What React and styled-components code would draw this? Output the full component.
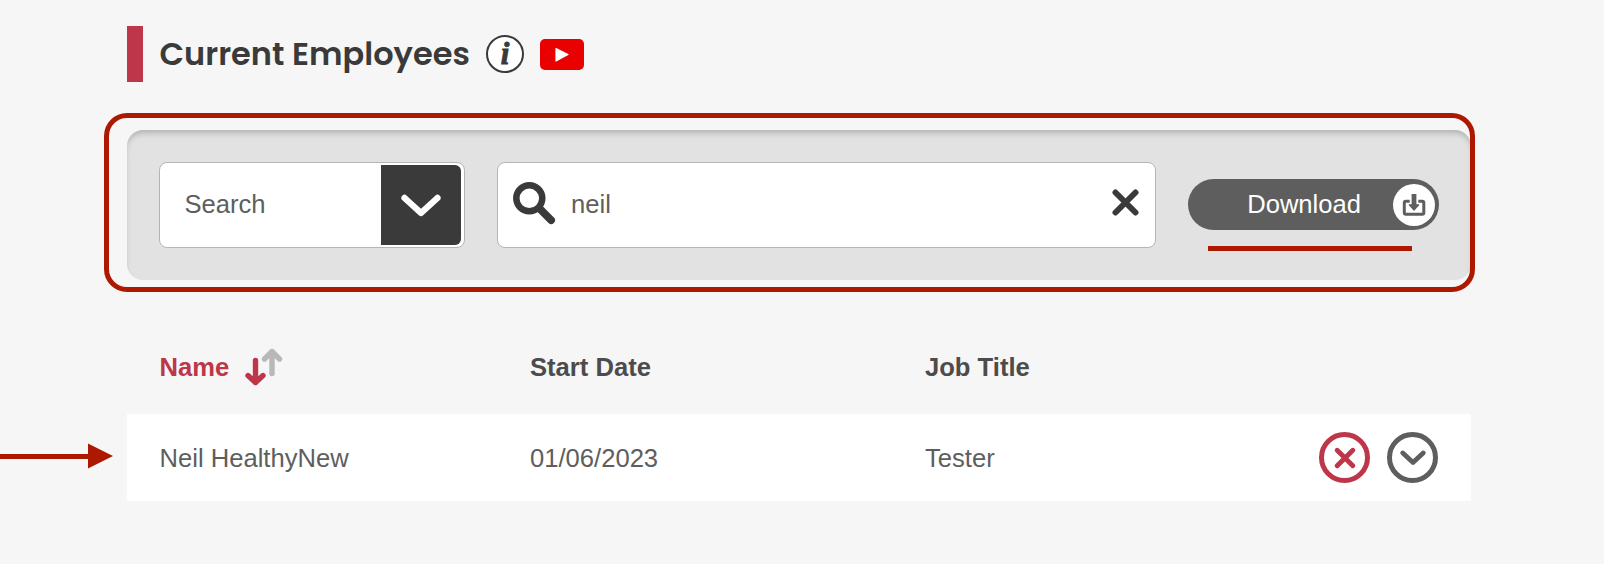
import React, {useState} from "react";
import styled, {createGlobalStyle} from "styled-components";

const cherry = '#bd3649';
const brick = '#ad1900';
const charcoal = '#3a3a3a';
const grey = '#5e5e5e';

const GlobalStyle = createGlobalStyle`
  * {
    box-sizing: border-box;
  }

  body {
    margin: 0;
    background: #f6f6f6;
    color: ${grey};
    font-family: "Liberation Sans", Arial, sans-serif;
    font-size: 25.6px;
    line-height: 30px;
  }

  svg {
    display: block;
    flex: none;
  }
`;

const Page = styled.main`
  position: relative;
  width: 1604px;
  height: 564px;
  padding: 26px 133px 0 127px;
  overflow: hidden;
`;

const TitleBar = styled.header`
  display: flex;
  align-items: center;
  height: 56px;
  padding-left: 16.5px;
  border-left: 16px solid ${cherry};
`;

const Title = styled.h1`
  width: 326.5px;
  margin: 0;
  color: ${charcoal};
  font-family: Poppins, Inter, sans-serif;
  font-size: 32px;
  font-weight: 600;
  line-height: 40px;
  white-space: nowrap;
`;

const InfoIcon = styled.span`
  display: flex;
  align-items: center;
  justify-content: center;
  width: 38px;
  height: 38px;
  margin: 0 15.5px 1px 0;
  border: 2px solid ${charcoal};
  border-radius: 50%;
  background: white;
  color: ${charcoal};
  font: italic bold 31px/32px "Liberation Serif", serif;
  -webkit-text-stroke: 0.9px ${charcoal};
`;

const FilterPanel = styled.section`
  position: relative;
  display: flex;
  align-items: center;
  gap: 32px;
  height: 150px;
  margin-top: 48px;
  padding: 0 32px;
  border-radius: 16px;
  background: #e2e2e2;
  box-shadow: inset 0 5px 6px -2px rgba(0, 0, 0, 0.22);
`;

const Field = styled.div`
  display: flex;
  align-items: center;
  width: ${props => props.$width};
  height: 86px;
  border: 1px solid #b5b5b5;
  border-radius: 8px;
  background: white;
`;

const FieldText = styled.span`
  flex: 1;
  padding: 0 0 2px 24.5px;
`;

const DropdownButton = styled.button`
  display: flex;
  align-items: center;
  justify-content: center;
  width: 80px;
  height: 80px;
  margin-right: 3px;
  padding: 2px 0 0;
  border: none;
  border-radius: 0 6px 6px 0;
  background: ${charcoal};
  cursor: pointer;
`;

const SearchIconWrap = styled.span`
  margin: 0 0 3px 15px;
`;

const SearchInput = styled.input`
  flex: 1;
  min-width: 0;
  height: 60px;
  padding: 0 0 1px 15px;
  border: none;
  outline: none;
  background: none;
  color: ${grey};
  font: inherit;
`;

const ClearButton = styled.button`
  margin: 0 16px 5px 0;
  padding: 0;
  border: none;
  background: none;
  cursor: pointer;
`;

const DownloadButton = styled.button`
  display: flex;
  align-items: center;
  justify-content: flex-end;
  width: 251px;
  height: 51px;
  margin-bottom: 1px;
  padding: 0 4px 0 0;
  border: none;
  border-radius: 26px;
  background: ${grey};
  color: white;
  font: inherit;
  cursor: pointer;
`;

const DownloadText = styled.span`
  padding-bottom: 1px;
`;

const DownloadBadge = styled.span`
  display: flex;
  align-items: center;
  justify-content: center;
  width: 42px;
  height: 42px;
  margin-left: 32px;
  border-radius: 50%;
  background: white;
`;

// Annotations lie over the panel
const Outline = styled.div`
  position: absolute;
  inset: -17px -4px -12px -23px;
  border: 5px solid ${brick};
  border-radius: 23px;
  pointer-events: none;
`;

const Underline = styled.div`
  position: absolute;
  top: 116px;
  left: 1081px;
  width: 204px;
  height: 5px;
  background: ${brick};
`;

const Pointer = styled.svg`
  position: absolute;
  top: 443px;
  left: 0;
`;

const Row = styled.div`
  display: grid;
  grid-template-columns: 370.5px 395px 1fr auto;
  align-items: center;
  height: ${props => props.$head ? '94px' : '87px'};
  padding: 0 33px 0 32.5px;
  background: ${props => props.$head ? 'none' : 'white'};
`;

const Table = styled.section`
  margin-top: 40px;
`;

const HeadCell = styled.div`
  display: flex;
  align-items: center;
  gap: 16px;
  color: ${props => props.$active ? cherry : '#4c4c4c'};
  font-weight: bold;
`;

const Actions = styled.div`
  display: flex;
  gap: 17px;
`;

const RoundButton = styled.button`
  display: flex;
  align-items: center;
  justify-content: center;
  width: 51px;
  height: 51px;
  padding: 0;
  border: 5px solid ${props => props.$color};
  border-radius: 50%;
  background: white;
  cursor: pointer;
`;

const Stroke = ({width, height, d, color, weight, children}) => {
    return <svg width={width} height={height} viewBox={`0 0 ${width} ${height}`} fill="none" stroke={color}
                strokeWidth={weight} strokeLinecap="round" strokeLinejoin="round">
        <path d={d}/>
        {children}
    </svg>;
}

const VideoIcon = () => {
    return <svg width="44" height="31" viewBox="0 0 44 31">
        <rect width="44" height="31" rx="5" fill="#e90000"/>
        <path d="M16 9.5 28 15.5 16 22Z" fill="white" stroke="white" strokeWidth="1.2" strokeLinejoin="round"/>
    </svg>;
}

const SearchIcon = () => {
    return <svg width="43" height="43" viewBox="0 0 43 43" fill="none" stroke={charcoal}>
        <circle cx="16.3" cy="16.3" r="13" strokeWidth="6.5"/>
        <path d="M26.5 26.5 38.2 38.2" strokeWidth="7.6" strokeLinecap="round"/>
    </svg>;
}

const DownloadIcon = () => {
    return <svg width="24" height="24" viewBox="0.7 0 24 24" fill="none" stroke={grey}>
        <path d="M8.4 8.2H4.5Q3 8.2 3 9.7V19.8Q3 21.3 4.5 21.3H21Q22.5 21.3 22.5 19.8V9.7Q22.5 8.2 21 8.2H17"
              strokeWidth="3"/>
        <path d="M12.7 1V13" strokeWidth="4.8"/>
        <path d="M8 11.8H17.4L12.7 17Z" fill={grey} strokeWidth="1.2" strokeLinejoin="round"/>
    </svg>;
}

const SortIcon = () => {
    return <Stroke width={38} height={38} weight={5.4} color="#b8b8b8" d="M27 25.5V3.5M19.5 11 27 3.5 34.5 11">
        <path stroke={cherry} d="M10.5 12.5V34.5M3 27.5 10.5 34.5 18 27.5"/>
    </Stroke>;
}

const employees = [
    {name: 'Neil HealthyNew', startDate: '01/06/2023', jobTitle: 'Tester'},
];

const App = () => {

    const [query, setQuery] = useState('neil');

    return <Page>
        <GlobalStyle/>
        <TitleBar>
            <Title>Current Employees</Title>
            <InfoIcon>i</InfoIcon>
            <VideoIcon/>
        </TitleBar>
        <FilterPanel>
            <Field $width="306px">
                <FieldText>Search</FieldText>
                <DropdownButton>
                    <Stroke width={40} height={24} weight={6.4} color="white" d="M3.6 4 20 19 36.4 4"/>
                </DropdownButton>
            </Field>
            <Field $width="659px">
                <SearchIconWrap>
                    <SearchIcon/>
                </SearchIconWrap>
                <SearchInput value={query} onChange={e => setQuery(e.target.value)}/>
                <ClearButton onClick={() => setQuery('')}>
                    <Stroke width={27} height={27} weight={6} color={charcoal} d="M3.5 3.5 23.5 23.5M23.5 3.5 3.5 23.5"/>
                </ClearButton>
            </Field>
            <DownloadButton>
                <DownloadText>Download</DownloadText>
                <DownloadBadge><DownloadIcon/></DownloadBadge>
            </DownloadButton>
            <Underline/>
            <Outline/>
        </FilterPanel>
        <Table>
            <Row $head>
                <HeadCell $active>Name<SortIcon/></HeadCell>
                <HeadCell>Start Date</HeadCell>
                <HeadCell>Job Title</HeadCell>
            </Row>
            {employees.map(employee => <Row key={employee.name}>
                <span>{employee.name}</span>
                <span>{employee.startDate}</span>
                <span>{employee.jobTitle}</span>
                <Actions>
                    <RoundButton $color={cherry}>
                        <Stroke width={22} height={22} weight={4.8} color={cherry} d="M3.2 3.2 18.8 18.8M18.8 3.2 3.2 18.8"/>
                    </RoundButton>
                    <RoundButton $color={grey}>
                        <Stroke width={26} height={16} weight={4.8} color={grey} d="M2.8 3 13 12.5 23.2 3"/>
                    </RoundButton>
                </Actions>
            </Row>)}
        </Table>
        <Pointer width="113" height="26" viewBox="0 0 113 26" fill={brick}>
            <path d="M0 11H88V.4L113 13 88 25.6V16H0Z"/>
        </Pointer>
    </Page>;
}

export default App;
